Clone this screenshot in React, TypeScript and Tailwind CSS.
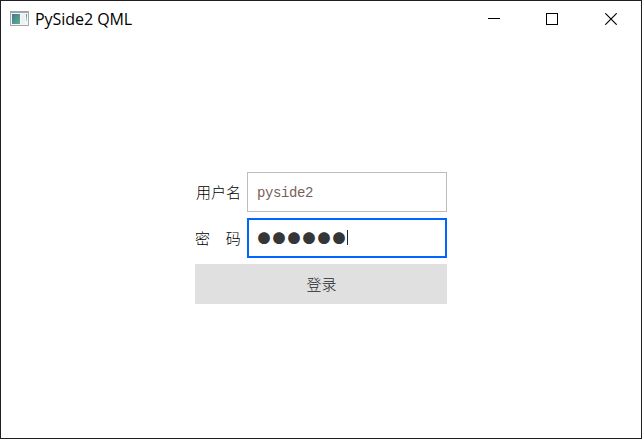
const cjk = "font-['Noto_Sans_CJK_SC',sans-serif] font-light";

function AppIcon() {
  return (
    <svg width="20" height="16" viewBox="0 0 20 16" shapeRendering="crispEdges">
      <defs>
        <linearGradient id="screen" x1="0" y1="0" x2="1" y2="1">
          <stop offset="0" stopColor="#42789a" />
          <stop offset="1" stopColor="#60b184" />
        </linearGradient>
        <linearGradient id="bar" x1="0" y1="0" x2="0" y2="1">
          <stop offset="0" stopColor="#4a8fa8" />
          <stop offset="1" stopColor="#b5e0bd" />
        </linearGradient>
      </defs>
      <rect x="1.5" y="0.5" width="18" height="14" fill="#f5f6f7" stroke="#a3a8ad" />
      <rect x="1" y="0" width="19" height="2" fill="#a0a5ab" />
      <rect x="3" y="3" width="8" height="10" fill="url(#screen)" />
      <rect x="12" y="3" width="4" height="10" fill="#eef1f3" />
      <rect x="17" y="3" width="1" height="7" fill="url(#bar)" />
    </svg>
  );
}

function TitleBar() {
  return (
    <header className="flex h-[35px] items-center justify-between pl-2">
      <div className="flex items-center gap-[6px]">
        <AppIcon />
        <span className="font-['Open_Sans',sans-serif] text-[16px] leading-5 tracking-[-0.05px] text-black">PySide2 QML</span>
      </div>
      <div className="flex h-full">
        <div className="flex w-[58px] items-center justify-center">
          <svg width="12" height="12" shapeRendering="crispEdges"><path d="M0 5.5H12" stroke="#000" /></svg>
        </div>
        <div className="flex w-[58px] items-center justify-center">
          <svg width="12" height="12" shapeRendering="crispEdges"><rect x="0.5" y="0.5" width="11" height="11" fill="none" stroke="#000" /></svg>
        </div>
        <div className="flex w-[60px] items-center justify-center">
          <svg width="12" height="12"><path d="M0.3 0.3L11.7 11.7M11.7 0.3L0.3 11.7" stroke="#000" strokeWidth="1.15" /></svg>
        </div>
      </div>
    </header>
  );
}

export default function App() {
  return (
    <div className="flex h-[439px] w-[642px] flex-col overflow-hidden border border-[#201e20] bg-white">
      <TitleBar />
      <main className="flex flex-col items-start gap-[6px] pt-[136px] pl-[194px]">
        <div className="flex items-center">
          <span className={`${cjk} w-[52px] whitespace-pre pl-px text-[15px] leading-5 text-black`}>用户名</span>
          <div className="flex h-10 w-[200px] items-center border border-[#bdbdbd] pl-[9px]">
            <span className="pt-px font-['Liberation_Mono',monospace] text-[14px] leading-5 tracking-[-0.4px] text-[#775f59]">pyside2</span>
          </div>
        </div>
        <div className="flex items-center">
          <span className={`${cjk} w-[52px] whitespace-pre text-[15px] leading-5 tracking-[0.4px] text-black`}>密　码</span>
          <div className="flex h-10 w-[200px] items-center border-2 border-[#0066ff] pl-[8.5px]">
            <span className="font-['Noto_Sans_CJK_SC',sans-serif] text-[13px] leading-5 tracking-[2px] text-[#353637]">●●●●●●</span>
            <span className="-ml-px mb-px h-[15px] w-px bg-[#26282a]" />
          </div>
        </div>
        <div className="flex h-10 w-[252px] items-center justify-center bg-[#e0e0e0]">
          <span className={`${cjk} pl-px text-[15px] leading-5 text-[#26282a]`}>登录</span>
        </div>
      </main>
    </div>
  );
}
